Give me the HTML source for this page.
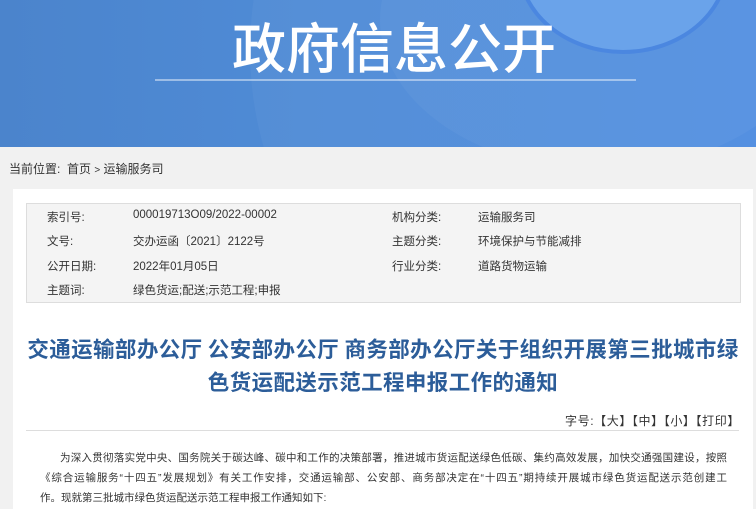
<!DOCTYPE html>
<html><head><meta charset="utf-8"><style>
*{margin:0;padding:0;box-sizing:border-box}
body{width:756px;height:504px;overflow:hidden;background:#f1f1f1;font-family:"Liberation Sans","Noto Sans CJK SC",sans-serif;color:#333;position:relative}
.banner{position:absolute;left:0;top:0;width:756px;height:147px;background:linear-gradient(90deg,#4b84cc 0%,#4f8bd6 40%,#4e8ce0 100%);overflow:hidden}
.c1{position:absolute;left:250px;top:-300px;width:700px;height:700px;border-radius:50%;background:rgba(255,255,255,0.04)}
.c2{position:absolute;left:380px;top:-130px;width:440px;height:300px;border-radius:50%;background:rgba(255,255,255,0.04)}
.c3{position:absolute;left:521px;top:-120px;width:204px;height:170px;border-radius:50%;background:#6aa3ea;box-shadow:0 0 0 4px #4b87e0}
.bt{position:absolute;left:232px;width:340px;top:12px;color:#fff;font-size:54px;line-height:66px;font-family:"Noto Sans CJK SC",sans-serif;font-weight:500;white-space:nowrap}
.bl{position:absolute;left:155px;top:79px;width:481px;height:2px;background:rgba(255,255,255,0.45)}
.crumb{position:absolute;left:9px;top:160px;font-size:12px;color:#333}
.panel{position:absolute;left:13px;top:189px;width:740px;height:320px;background:#fff}
.info{position:absolute;left:26px;top:203px;width:715px;height:100px;background:#f4f4f4;border:1px solid #ddd;font-size:11.5px;color:#333}
.info span{position:absolute;white-space:nowrap}
.title{position:absolute;left:13px;width:740px;top:332px;text-align:center;color:#2c5d99;font-size:21.5px;letter-spacing:0.4px;font-weight:bold;line-height:33px;font-family:"Noto Sans CJK SC",sans-serif;white-space:nowrap}
.fs{position:absolute;left:565px;top:412px;font-size:12px;letter-spacing:0.6px;color:#333;white-space:nowrap}
.sep{position:absolute;left:26px;top:430px;width:713px;height:1px;background:#ddd}
.body{position:absolute;left:40px;top:448px;width:687px;font-size:10.5px;line-height:20px;color:#333}
.body div{text-align:justify;text-align-last:justify}
</style></head><body>
<div class="banner"><div class="c1"></div><div class="c2"></div><div class="c3"></div>
<div class="bt">政府信息公开</div><div class="bl"></div></div>
<div class="crumb">当前位置:&nbsp; 首页 <span style="font-size:10px">&gt;</span> 运输服务司</div>
<div class="panel"></div>
<div class="info">
<span style="left:20px;top:5px">索引号:</span><span style="left:106px;top:5px">000019713O09/2022-00002</span>
<span style="left:365px;top:5px">机构分类:</span><span style="left:451px;top:5px">运输服务司</span>
<span style="left:20px;top:29px">文号:</span><span style="left:106px;top:29px">交办运函〔2021〕2122号</span>
<span style="left:365px;top:29px">主题分类:</span><span style="left:451px;top:29px">环境保护与节能减排</span>
<span style="left:20px;top:54px">公开日期:</span><span style="left:106px;top:54px">2022年01月05日</span>
<span style="left:365px;top:54px">行业分类:</span><span style="left:451px;top:54px">道路货物运输</span>
<span style="left:20px;top:78px">主题词:</span><span style="left:106px;top:78px">绿色货运;配送;示范工程;申报</span>
</div>
<div class="title">交通运输部办公厅 公安部办公厅 商务部办公厅关于组织开展第三批城市绿<br>色货运配送示范工程申报工作的通知</div>
<div class="fs">字号:【大】【中】【小】【打印】</div>
<div class="sep"></div>
<div class="body">
<div style="padding-left:20px">为深入贯彻落实党中央、国务院关于碳达峰、碳中和工作的决策部署，推进城市货运配送绿色低碳、集约高效发展，加快交通强国建设，按照</div>
<div>《综合运输服务“十四五”发展规划》有关工作安排，交通运输部、公安部、商务部决定在“十四五”期持续开展城市绿色货运配送示范创建工</div>
<div style="text-align-last:left">作。现就第三批城市绿色货运配送示范工程申报工作通知如下:</div>
</div>
</body></html>
